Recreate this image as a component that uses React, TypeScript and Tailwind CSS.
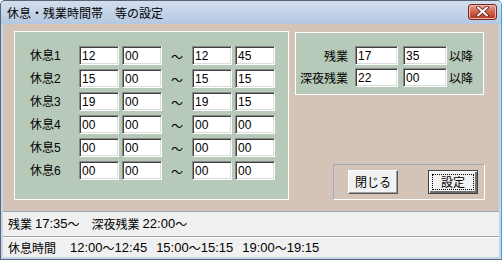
import React from "react";

const jp = "font-['Noto_Sans_CJK_JP',sans-serif]";
const num = "font-['Liberation_Sans','Noto_Sans_CJK_JP',sans-serif]";

function Box({ v, w = 40 }: { v: string; w?: number }) {
  return (
    <div
      className={`h-[19px] bg-white border border-t-[#8a8a8a] border-l-[#8a8a8a] border-r-white border-b-white shadow-[inset_1px_1px_0_#404040,inset_-1px_-1px_0_#dcdcdc] pl-[2px] pt-[2px] text-[12px] leading-[14px] text-black ${num} ${w === 40 ? "w-[40px]" : w === 43 ? "w-[43px]" : "w-[44px]"}`}
    >
      {v}
    </div>
  );
}

const rows = [
  ["12", "00", "12", "45"],
  ["15", "00", "15", "15"],
  ["19", "00", "19", "15"],
  ["00", "00", "00", "00"],
  ["00", "00", "00", "00"],
  ["00", "00", "00", "00"],
];

export default function App() {
  return (
    <div className="w-[502px] h-[260px] flex flex-col overflow-hidden bg-[#c6d5e8] border border-[#56657a] border-r-[#3aa6e8] rounded-t-[5px]">
      {/* title bar */}
      <div className="h-[23px] shrink-0 flex items-center justify-between pl-[6px] pr-[4px] bg-gradient-to-b from-[#d3deec] to-[#b4c8e2]">
        <span className={`text-[12px] leading-[14px] text-black ${jp}`}>休息・残業時間帯　等の設定</span>
        <div className="w-[29px] h-[16px] mt-[-2px] rounded-[3px] border border-[#6e2a22] bg-gradient-to-b from-[#e7a595] via-[#d0604c] to-[#b8321f] flex items-center justify-center shadow-[inset_0_0_0_1px_#f0b8aa]">
          <svg width="13" height="11" viewBox="0 0 13 11">
            <path d="M2 1.5 L11 9.5 M11 1.5 L2 9.5" stroke="#5a1a10" strokeWidth="3.6" strokeLinecap="round" />
            <path d="M2 1.5 L11 9.5 M11 1.5 L2 9.5" stroke="#ffffff" strokeWidth="2" strokeLinecap="round" />
          </svg>
        </div>
      </div>

      {/* content */}
      <div className="flex-1 flex flex-col mx-[2px] mb-[2px] bg-[#d4c4b8]">
        <div className="h-[187px] shrink-0 flex pl-[11px] pt-[7px]">
          {/* left panel */}
          <div className="w-[275px] h-[169px] border border-white bg-[#b7c9b9] pl-[15px] pt-[14px] flex flex-col gap-[4px]">
            {rows.map((r, i) => (
              <div key={i} className="flex items-center h-[19px]">
                <div className={`w-[49px] text-[12px] leading-[14px] text-black ${jp}`}>
                  休息<span className={num}>{i + 1}</span>
                </div>
                <div className="flex gap-[3px]">
                  <Box v={r[0]} />
                  <Box v={r[1]} />
                </div>
                <div className={`w-[30px] text-center text-[12px] leading-[14px] pt-[2px] text-black ${jp}`}>～</div>
                <div className="flex gap-[3px]">
                  <Box v={r[2]} />
                  <Box v={r[3]} />
                </div>
              </div>
            ))}
          </div>

          {/* right column */}
          <div className="ml-[6px] w-[190px] h-[169px] flex flex-col">
            <div className="mt-[1px] w-[189px] h-[63px] border border-white bg-[#b7c9b9] pt-[13px] flex flex-col gap-[3px]">
              {[
                ["残業", "17", "35"],
                ["深夜残業", "22", "00"],
              ].map((r, i) => (
                <div key={i} className="flex items-center h-[19px]">
                  <div className={`w-[52px] text-right text-[12px] leading-[14px] text-black ${jp}`}>{r[0]}</div>
                  <div className="ml-[7px] flex gap-[5px]">
                    <Box v={r[1]} w={43} />
                    <Box v={r[2]} w={44} />
                  </div>
                  <div className={`ml-[2px] text-[12px] leading-[14px] text-black ${jp}`}>以降</div>
                </div>
              ))}
            </div>
            <div className="mt-auto ml-[38px] w-[152px] h-[36px] border border-t-[#a3a9bf] border-l-[#a3a9bf] border-r-white border-b-white flex items-center pl-[14px]">
              <div className={`w-[50px] h-[24px] bg-[#f2f2f2] border border-t-white border-l-white border-r-[#555] border-b-[#555] shadow-[inset_-1px_-1px_0_#a0a0a0] flex items-center justify-center text-[12px] leading-[14px] text-black ${jp}`}>
                閉じる
              </div>
              <div className="ml-[30px] w-[50px] h-[24px] border border-[#404040] bg-[#f2f2f2] shadow-[inset_1px_1px_0_#ffffff,inset_-2px_-2px_0_#707070] p-[3px]">
                <div className={`w-full h-full border border-dotted border-black flex items-center justify-center text-[12px] leading-[14px] text-black ${jp}`}>
                  設定
                </div>
              </div>
            </div>
          </div>
        </div>

        {/* status bars */}
        <div className="flex-1 flex flex-col bg-[#f0f0f0] border-t border-[#9ea5b8]">
          <div className={`h-[25px] flex items-center pl-[5px] text-[12px] leading-[14px] text-black ${jp} border-b border-[#a0a0a0]`}>
            残業 <span className={`${num} text-[13px] ml-[3px]`}>17:35</span>～　深夜残業 <span className={`${num} text-[13px] ml-[3px]`}>22:00</span>～
          </div>
          <div className={`flex-1 flex items-center pl-[5px] border-t border-white text-[12px] leading-[14px] text-black ${jp}`}>
            休息時間<span className={`${num} text-[13px] ml-[14px]`}>12:00</span>～<span className={`${num} text-[13px]`}>12:45</span>
            <span className={`${num} text-[13px] ml-[9px]`}>15:00</span>～<span className={`${num} text-[13px]`}>15:15</span>
            <span className={`${num} text-[13px] ml-[9px]`}>19:00</span>～<span className={`${num} text-[13px]`}>19:15</span>
          </div>
        </div>
      </div>
    </div>
  );
}
